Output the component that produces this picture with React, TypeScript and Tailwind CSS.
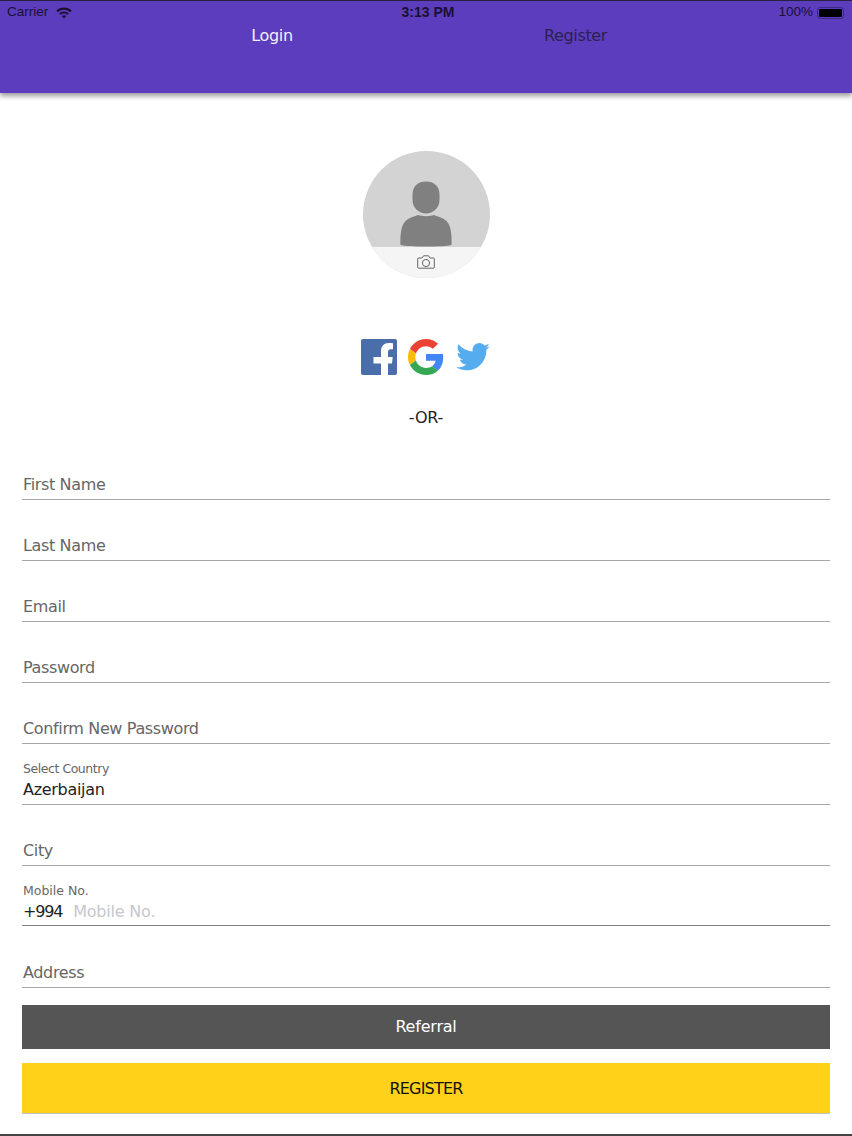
import React from 'react';

function Field({ label, tall }: { label: string; tall?: boolean }) {
    return (
        <div className={`${tall ? 'h-[62px]' : 'h-[61px]'} flex items-end border-b border-[#a8a8a8] pb-[2px] pl-[1px]`}>
            <span className="text-[16px] leading-[24px] tracking-[-0.36px] text-[#666666]">{label}</span>
        </div>
    );
}

function Person() {
    return (
        <svg width="52" height="66" viewBox="0 0 52 66" fill="#808080">
            <path d="M12.500 14 C12.500 5 18 0.500 26 0.500 C34 0.500 39.500 5 39.500 14 V19 C39.500 27 33 32.500 26 32.500 C19 32.500 12.500 27 12.500 19 Z" />
            <path d="M0.500 64 C0 56 1 46 4 42 C7 37 13 36 18 34 C22 35.500 30 35.500 34 34 C39 36 45 37 48 42 C51 46 52 56 51.500 64 C44 66 8 66 0.500 64 Z" />
        </svg>
    );
}

function Camera() {
    return (
        <svg width="18" height="14" viewBox="0 0 18 14" fill="none" stroke="#666666" strokeWidth="1">
            <path d="M1.500 3 H5 L6.500 0.800 H11.500 L13 3 H16.500 Q17.300 3 17.300 4 V12.200 Q17.300 13.200 16.500 13.200 H1.500 Q0.700 13.200 0.700 12.200 V4 Q0.700 3 1.500 3 Z" />
            <circle cx="9" cy="8" r="3.600" />
        </svg>
    );
}

function Wifi() {
    return (
        <svg width="16" height="12" viewBox="0 0 16 12" fill="#1b1033">
            <path d="M8 0.500 C11 0.500 13.700 1.700 15.700 3.600 L14.200 5.200 C12.600 3.700 10.400 2.700 8 2.700 C5.600 2.700 3.400 3.700 1.800 5.200 L0.300 3.600 C2.300 1.700 5 0.500 8 0.500 Z" />
            <path d="M8 4.400 C9.900 4.400 11.600 5.100 12.900 6.400 L11.400 8 C10.500 7.100 9.300 6.600 8 6.600 C6.700 6.600 5.500 7.100 4.600 8 L3.100 6.400 C4.400 5.100 6.100 4.400 8 4.400 Z" />
            <path d="M8 8.200 C8.900 8.200 9.600 8.500 10.200 9.100 L8 11.500 L5.800 9.100 C6.400 8.500 7.100 8.200 8 8.200 Z" />
        </svg>
    );
}

function Facebook() {
    return (
        <svg width="36" height="36" viewBox="0 0 36 36">
            <rect width="36" height="36" rx="2" fill="#4a6ea9" />
            <path d="M27 36 V24.500 H31 L31.700 18 H27 V13.500 C27 11.500 27.800 10.300 30 10.300 H32 V4.200 C31.200 4.100 29.500 4 27.800 4 C23 4 20 7 20 12.500 V18 H12.500 V24.500 H20 V36 Z" fill="#ffffff" />
        </svg>
    );
}

function Google() {
    return (
        <svg width="36" height="36" viewBox="0 0 48 48">
            <path fill="#EA4335" d="M24 9.500c3.500 0 6.700 1.200 9.200 3.600l6.900-6.900C35.900 2.400 30.500 0 24 0 14.600 0 6.500 5.400 2.600 13.200l8 6.200C12.400 13.700 17.700 9.500 24 9.500z" />
            <path fill="#4285F4" d="M47 24.500c0-1.600-.1-3.100-.4-4.500H24v9h12.900c-.6 3-2.200 5.500-4.800 7.200l7.700 6c4.500-4.200 7.200-10.300 7.200-17.700z" />
            <path fill="#FBBC05" d="M10.500 28.600c-.5-1.400-.8-3-.8-4.600s.3-3.200.8-4.600l-8-6.200C.9 16.500 0 20.100 0 24s.9 7.500 2.600 10.800l7.900-6.200z" />
            <path fill="#34A853" d="M24 48c6.500 0 11.900-2.100 15.900-5.800l-7.700-6c-2.200 1.500-4.900 2.300-8.200 2.300-6.300 0-11.600-4.200-13.500-9.900l-8 6.200C6.500 42.600 14.600 48 24 48z" />
        </svg>
    );
}

function Twitter() {
    return (
        <svg width="34" height="28" viewBox="0 0 24 20" className="ml-[1px]">
            <path fill="#55acee" d="M24 2.400c-.9.4-1.800.7-2.800.8 1-.6 1.800-1.600 2.200-2.700-1 .6-2 1-3.100 1.200C19.300.7 18 0 16.600 0c-2.700 0-4.900 2.200-4.900 4.900 0 .4 0 .8.100 1.100C7.700 5.800 4.100 3.900 1.700.9c-.4.700-.7 1.600-.7 2.500 0 1.700.9 3.200 2.200 4.100-.8 0-1.600-.2-2.200-.6v.1c0 2.400 1.700 4.400 3.900 4.800-.4.100-.8.200-1.300.2-.3 0-.6 0-.9-.1.600 2 2.400 3.400 4.600 3.400-1.700 1.300-3.800 2.100-6.100 2.100-.4 0-.8 0-1.200-.1C2.200 18.700 4.800 19.500 7.500 19.500c9.100 0 14-7.500 14-14v-.6c1-.7 1.800-1.600 2.500-2.500z" />
        </svg>
    );
}

export default function App() {
    return (
        <div className="w-[852px] h-[1136px] bg-white flex flex-col overflow-hidden font-['DejaVu_Sans',sans-serif]">
            {/* Header */}
            <div className="relative h-[93px] shrink-0 bg-[#5c3dbd] border-t border-[#2a2140] shadow-[0_3px_5px_rgba(0,0,0,0.4)]">
                <div className="h-[23px] px-[7px] flex items-center justify-between text-[13.500px] text-[#1b1033] font-['Liberation_Sans',sans-serif]">
                    <div className="flex items-center gap-[8px] w-[200px]">
                        <span>Carrier</span>
                        <Wifi />
                    </div>
                    <span className="font-bold text-[14px] pl-[4px]">3:13 PM</span>
                    <div className="flex items-center justify-end gap-[4px] w-[200px] pr-[1px]">
                        <span>100%</span>
                        <div className="w-[27px] h-[12px] border border-[#3c2a80] rounded-[3px] p-[1px]">
                            <div className="w-full h-full bg-black rounded-[1px]" />
                        </div>
                    </div>
                </div>
                <div className="flex">
                    <div className="w-[544px] text-center text-[16px] leading-[24px] tracking-[-0.36px] text-[#f2effb]">Login</div>
                    <div className="w-[62px] text-center text-[16px] leading-[24px] tracking-[-0.36px] text-[#2b2150] whitespace-nowrap">Register</div>
                </div>
            </div>

            {/* Avatar */}
            <div className="flex justify-center pt-[58px]">
                <div className="relative w-[127px] h-[127px] rounded-full bg-[#d3d3d3] overflow-hidden flex justify-center">
                    <div className="mt-[30px]"><Person /></div>
                    <div className="absolute left-0 right-0 bottom-0 h-[31px] bg-[#f5f5f5] flex items-center justify-center pb-[2px]">
                        <Camera />
                    </div>
                </div>
            </div>

            {/* Social */}
            <div className="flex justify-center items-center gap-[11px] mt-[61px] h-[36px] pr-[1px]">
                <Facebook />
                <Google />
                <Twitter />
            </div>
            <div className="text-center text-[16px] leading-[24px] tracking-[-0.2px] text-[#222222] mt-[31px]">-OR-</div>

            {/* Form */}
            <div className="px-[22px] mt-[9px] flex flex-col">
                <Field label="First Name" />
                <Field label="Last Name" />
                <Field label="Email" />
                <Field label="Password" />
                <Field label="Confirm New Password" />
                <div className="h-[61px] flex flex-col justify-end border-b border-[#a8a8a8] pb-[2px] pl-[1px]">
                    <span className="text-[12.500px] leading-[16px] tracking-[-0.45px] text-[#666666] -translate-y-[1px]">Select Country</span>
                    <span className="text-[16px] leading-[24px] tracking-[-0.3px] text-[#222222]">Azerbaijan</span>
                </div>
                <Field label="City" />
                <div className="h-[60px] flex flex-col justify-end border-b border-[#808080] pb-[1px] pl-[1px]">
                    <span className="text-[12.500px] leading-[16px] text-[#666666] -translate-y-[1px]">Mobile No.</span>
                    <div className="flex gap-[11px] text-[16px] leading-[24px]">
                        <span className="text-[#222222] tracking-[-1.2px]">+994</span>
                        <span className="text-[#c7c7cd] tracking-[-0.2px]">Mobile No.</span>
                    </div>
                </div>
                <Field label="Address" tall />
                <div className="h-[44px] mt-[17px] bg-[#555555] flex items-center justify-center text-[16px] tracking-[-0.2px] text-white">Referral</div>
                <div className="h-[51px] mt-[14px] bg-[#ffd119] border-b border-[#c0c0c0] flex items-center justify-center text-[16px] tracking-[-0.8px] text-[#111111] pt-[1px]">REGISTER</div>
            </div>
            <div className="mt-auto h-[2px] bg-[#444444]" />
        </div>
    );
}
